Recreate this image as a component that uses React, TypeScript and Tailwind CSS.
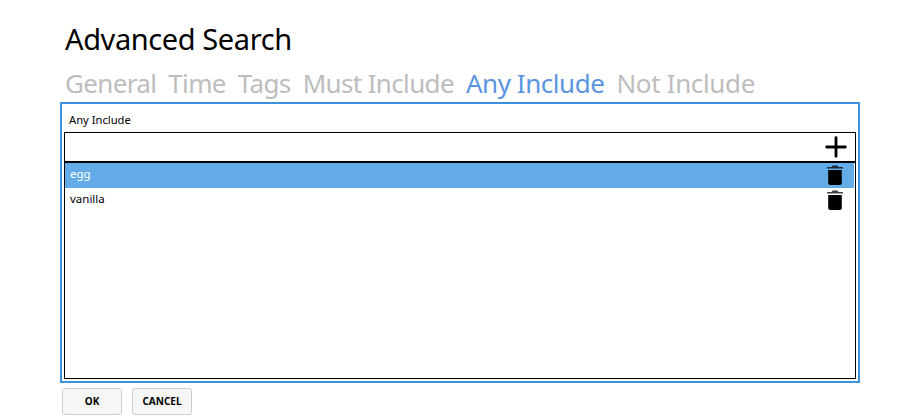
import { Plus } from 'lucide-react';

const font = { sans: "font-['Noto_Sans',sans-serif]" };

const tabs = ['General', 'Time', 'Tags', 'Must Include', 'Any Include', 'Not Include'];
const items = ['egg', 'vanilla'];

function TrashIcon() {
  return (
    <svg viewBox="0 0 16 20" className="h-[20px] w-[16px]" fill="#000">
      <path d="M5.5 0.5h5l0.8 1.5H15.5a0.5 0.5 0 0 1 0.5 0.5V3.6H0V2.5a0.5 0.5 0 0 1 0.5-0.5h4.2z" fillOpacity="0.75" />
      <path d="M1.2 5h13.6v13a2 2 0 0 1-2 2H3.2a2 2 0 0 1-2-2z" />
    </svg>
  );
}

export default function App() {
  return (
    <div className={`h-[416px] w-[913px] overflow-hidden bg-white pl-[60px] pr-[53px] ${font.sans}`}>
      <h1 className="pl-[5px] pt-[19px] text-[29px] leading-[40px] font-normal tracking-[-0.4px] text-black">
        Advanced Search
      </h1>
      <div className="mt-[5px] flex h-[38px] items-center gap-[12px] pl-[5px] text-[26px] leading-[38px] tracking-[-0.65px]">
        {tabs.map((tab) => (
          <span
            key={tab}
            className={
              tab === 'Any Include'
                ? 'tracking-[-0.45px] text-[#5b94e0]'
                : tab === 'Not Include'
                  ? 'tracking-[-0.35px] text-[#bdbdbd]'
                  : 'text-[#bdbdbd]'
            }
          >
            {tab}
          </span>
        ))}
      </div>
      <div className="flex h-[281px] flex-col border-2 border-[#3b93de] pl-[2px] pr-[2px] pb-[2px]">
        <div className="h-[28px] pl-[5px] pt-[8px] text-[11.2px] leading-[16px] text-black">Any Include</div>
        <div className="flex min-h-0 flex-1 flex-col border border-black">
          <div className="flex h-[30px] shrink-0 items-center justify-end border-b-2 border-black pr-[3px]">
            <Plus size={32} strokeWidth={2.1} color="#000" />
          </div>
          {items.map((item, i) => (
            <div
              key={item}
              className={`mr-[1px] flex h-[25px] shrink-0 items-center justify-between pb-[1px] pl-[5px] pr-[11px] text-[11.5px] ${
                i === 0 ? 'bg-[#64ace8] text-white' : 'text-black'
              }`}
            >
              <span className="pb-[2px]">{item}</span>
              <TrashIcon />
            </div>
          ))}
        </div>
      </div>
      <div className="mt-[5px] flex gap-[10px] pl-[2px]">
        <button className="h-[27px] w-[60px] rounded-[3px] border border-[#cfcfcf] bg-[#f6f6f6] text-[10px] font-bold text-black">
          OK
        </button>
        <button className="h-[27px] w-[60px] rounded-[3px] border border-[#cfcfcf] bg-[#f6f6f6] text-[10px] font-bold text-black">
          CANCEL
        </button>
      </div>
    </div>
  );
}
